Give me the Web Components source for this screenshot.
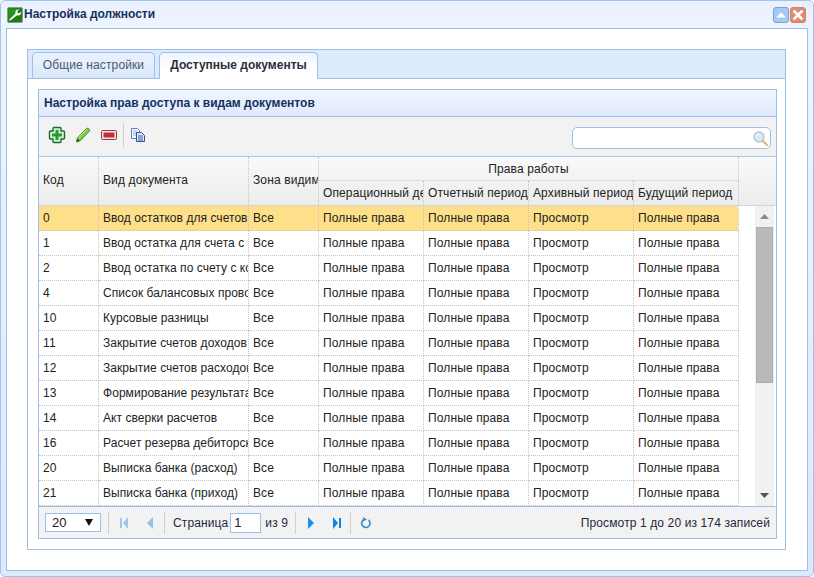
<!DOCTYPE html>
<html lang="ru"><head><meta charset="utf-8"><title>Настройка должности</title>
<style>
html,body{margin:0;padding:0;background:#fff;font:12px "Liberation Sans",Arial,sans-serif}
</style></head><body>
<x-window heading="Настройка должности">
  <x-tabs>
    <x-panel heading="Настройка прав доступа к видам документов">
      <x-toolbar slot="toolbar"></x-toolbar>
      <x-grid></x-grid>
      <x-pager slot="pager"></x-pager>
    </x-panel>
  </x-tabs>
</x-window>
<script>
function el(name,html){customElements.define(name,class extends HTMLElement{constructor(){super();this.attachShadow({mode:'open'}).innerHTML=typeof html==='function'?html(this):html;}});}

el('x-window',h=>`<style>
:host{display:flex;flex-direction:column;box-sizing:border-box;width:814px;height:577px;border:1px solid #a3c3ed;border-radius:5px;padding:0 5px 5px;background:linear-gradient(#e8f0fd,#eef4fe 20px,#dce9fc);color:#15315f}
.bar{display:flex;align-items:center;height:27px;flex:none}
.t{font-weight:bold;font-size:12px;margin-left:1px;padding-bottom:2px;color:#15315f;flex:1}
.wrench{margin-left:1px}
.btn{margin-left:1px;display:block}
.btn+.btn{margin-left:1px}
.body{flex:1;display:flex;box-sizing:border-box;border:1px solid #9dbfea;background:#fff;padding:20px 21px 20px 20px;min-height:0}
</style>
<div class="bar">
<svg class="wrench" width="16" height="16" viewBox="0 0 16 16"><rect x=".5" y=".5" width="15" height="15" rx="1.500" fill="#1f7a17" stroke="#7d9f84"/><path d="M1.500 1.500h13L1.500 14.500z" fill="#2e9a24" opacity=".7"/><path d="M3 13.800l-.8-1L8.500 6.500c-.6-1.800 0-3.600 2.700-4.100l.6.3-1.500 1.600.4 1.700 1.700.3 1.500-1.500.3.600c-.4 2.600-2.300 3.400-4.100 2.800z" fill="#fff"/></svg>
<div class="t">${h.getAttribute('heading')}</div>
<svg class="btn" width="16" height="16" viewBox="0 0 16 16"><rect x=".5" y=".5" width="15" height="15" rx="2.500" fill="#a6c8f5" stroke="#7da0d2"/><path d="M3 10.500L8 5.500l5 5z" fill="#fff"/></svg>
<svg class="btn" width="16" height="16" viewBox="0 0 16 16"><rect x=".5" y=".5" width="15" height="15" rx="2.500" fill="#e58a6b" stroke="#c08a75"/><path d="M4.500 4.500l7 7M11.500 4.500l-7 7" stroke="#fff" stroke-width="2.600" stroke-linecap="square"/></svg>
<span style="width:2px"></span>
</div>
<div class="body"><slot></slot></div>`);

el('x-tabs',`<style>
:host{display:flex;flex-direction:column;flex:1;box-sizing:border-box;border:1px solid #9dbfea;background:#fff;min-width:0}
.nav{display:flex;align-items:flex-end;height:29px;box-sizing:border-box;background:#dde9fd;border-bottom:1px solid #9dbfea;padding:2px 0 0 4px;gap:4px;flex:none}
.tab{box-sizing:border-box;height:26px;border:1px solid #9dbfea;border-bottom:0;border-radius:5px 5px 0 0;display:flex;align-items:center;justify-content:center;font-size:12px;padding-bottom:2px}
.a{width:123px;background:linear-gradient(#eaf2fe,#dbe8fc);color:#4a5a72;letter-spacing:.12px}
.b{width:159px;height:27px;margin-bottom:-1px;background:linear-gradient(#eef4fe,#fff 60%);font-weight:bold;color:#2a2f3a}
.c{flex:1;display:flex;padding:10px 8px 10px 10px;min-height:0}
</style>
<div class="nav"><div class="tab a">Общие настройки</div><div class="tab b">Доступные документы</div></div>
<div class="c"><slot></slot></div>`);

el('x-panel',h=>`<style>
:host{display:flex;flex-direction:column;flex:1;box-sizing:border-box;border:1px solid #9dbfea;background:#fff;min-width:0}
.h{height:27px;flex:none;box-sizing:border-box;border-bottom:1px solid #9dbfea;background:linear-gradient(#f0f5fe,#dfeafd);font-weight:bold;font-size:12px;color:#15315f;display:flex;align-items:center;padding-left:5px}
</style>
<div class="h">${h.getAttribute('heading')}</div>
<slot name="toolbar"></slot><slot></slot><slot name="pager"></slot>`);

el('x-toolbar',`<style>
:host{display:flex;align-items:center;height:39px;flex:none;box-sizing:border-box;background:#f2f2f2;padding:0 0 3px 9px}
svg{display:block;flex:none}
.sep{width:1px;height:24px;background:#cfcfcf;margin:0 5px 0 6px;flex:none}
.s{margin:6px 5px 0 auto;width:199px;height:22px;box-sizing:border-box;border:1px solid #9dbfea;border-radius:5px;background:#fff;display:flex;align-items:center;justify-content:flex-end;padding-right:1px}
</style>
<svg width="18" height="18" viewBox="0 0 18 18" style="margin-right:8px"><path d="M6 1.500h6a1 1 0 0 1 1 1V5h2.500a1 1 0 0 1 1 1v6a1 1 0 0 1-1 1H13v2.500a1 1 0 0 1-1 1H6a1 1 0 0 1-1-1V13H2.500a1 1 0 0 1-1-1V6a1 1 0 0 1 1-1H5V2.500a1 1 0 0 1 1-1z" fill="#d9f0d8" stroke="#1d6b2c" stroke-width="1.400"/><path d="M7.500 4h3v3.500H14v3h-3.500V14h-3v-3.500H4v-3h3.500z" fill="#1f9c33"/></svg>
<svg width="18" height="18" viewBox="0 0 18 18" style="margin-right:7px"><path d="M2.500 16l.9-4L12.500 2.500c1-.8 2.500.2 3 1.200.3.600.2 1.100-.2 1.500L6.200 14.700z" fill="#7fcf3b" stroke="#2f7f20" stroke-width=".9"/><path d="M3.200 12.500l2.600 2-3.100 1.300z" fill="#1d5c18"/><path d="M4.500 11.800L13 3.300" stroke="#c8f09a" stroke-width="1"/></svg>
<svg width="18" height="18" viewBox="0 0 18 18"><rect x="2.500" y="4.500" width="15" height="9" rx="1" fill="#f3e4e4" stroke="#9a3b3b"/><rect x="4.500" y="6.500" width="11" height="5" fill="#b93238"/></svg>
<span class="sep"></span>
<svg width="18" height="18" viewBox="0 0 18 18"><path d="M2.500 2.500h6l2 2v8h-8z" fill="#f4f8fe" stroke="#5f82b8"/><path d="M4 5h4M4 7h5M4 9h5" stroke="#8fb0df"/><path d="M7.500 6.500h5l3 3v6h-8z" fill="#dbe7f8" stroke="#2f4f96"/><path d="M9 10h5M9 12h5M9 14h5" stroke="#3a62ad"/></svg>
<div class="s"><svg width="17" height="17" viewBox="0 0 17 17"><circle cx="7" cy="7" r="5" fill="#d6ecfb" stroke="#b6c1c9" stroke-width="1.300"/><path d="M3.800 6.500a3.500 3.500 0 0 1 3-2.800" stroke="#fff" fill="none"/><path d="M11 11l4 4" stroke="#e9b36d" stroke-width="2.200" stroke-linecap="round"/></svg></div>`);

const names=[['0','Ввод остатков для счетов'],['1','Ввод остатка для счета с аналитикой'],['2','Ввод остатка по счету с контрагентом'],['4','Список балансовых проводок'],['10','Курсовые разницы'],['11','Закрытие счетов доходов'],['12','Закрытие счетов расходов'],['13','Формирование результата'],['14','Акт сверки расчетов'],['16','Расчет резерва дебиторской'],['20','Выписка банка (расход)'],['21','Выписка банка (приход)']];
el('x-grid',()=>{
const cell=(t,c='')=>`<div class="c ${c}"><span>${t}</span></div>`;
const rows=names.map((n,i)=>`<div class="r${i==0?' sel':''}">`+cell(n[0])+cell(n[1],'n')+cell('Все')+cell('Полные права')+cell('Полные права')+cell('Просмотр')+cell('Полные права')+'</div>').join('');
return `<style>
:host{display:flex;flex-direction:column;flex:none;height:350px;box-sizing:border-box;border-top:1px solid #a9c6ee;color:#222;font-size:12px;letter-spacing:.12px;background:#fff}
.c{box-sizing:border-box;overflow:hidden;white-space:nowrap;border-right:1px dotted #c4c4c4;border-bottom:1px dotted #c4c4c4;padding:0 0 0 4px;display:flex;align-items:center}
.n{letter-spacing:.05px}
.hd{display:grid;grid-template-columns:60px 150px 70px 105px 105px 105px 105px 1fr;grid-template-rows:24px 24px;height:48px;flex:none;background:linear-gradient(#f9f9f9,#ececec);border-bottom:1px solid #d4d4d4;box-sizing:content-box}
.hd .c{border-bottom:0}
.sp{grid-row:span 2;padding-bottom:3px!important}
.top{grid-column:span 4;justify-content:center;border-bottom:1px dotted #c4c4c4!important;padding:0}
.hd .e{border-right:0}
.main{flex:1;display:flex;min-height:0}
.rows{width:699px;flex:none}
.r{display:grid;grid-template-columns:60px 150px 70px 105px 105px 105px 105px;height:25px}
.sel{background:#ffe08a}
.gap{width:17px;flex:none}
.sb{width:19px;flex:none;background:#f1f1f1;display:flex;flex-direction:column;align-items:center;justify-content:space-between}
.ar{height:21px;display:flex;align-items:center;justify-content:center;flex:none}
.th{width:17px;height:156px;background:#b9b9b9;box-sizing:border-box;border:1px solid #adadad;flex:none}
.tk{flex:1;width:100%;display:flex;justify-content:center}
</style>
<div class="hd">
<div class="c sp">Код</div><div class="c sp">Вид документа</div><div class="c sp"><span>Зона видимости</span></div>
<div class="c top">Права работы</div><div class="c sp e" style="grid-column:8;grid-row:1/span 2;border-left:0"></div>
<div class="c"><span>Операционный день</span></div><div class="c"><span>Отчетный период</span></div><div class="c"><span>Архивный период</span></div><div class="c"><span>Будущий период</span></div>
</div>
<div class="main"><div class="rows">${rows}</div><div class="gap"></div>
<div class="sb"><div class="ar"><svg width="9" height="5"><path d="M0 5L4.500 0 9 5z" fill="#8a8a8a"/></svg></div><div class="tk"><div class="th"></div></div><div class="ar" style="padding-top:2px"><svg width="9" height="5"><path d="M0 0L4.500 5 9 0z" fill="#555"/></svg></div></div></div>`;
});

el('x-pager',`<style>
:host{display:flex;align-items:center;flex:none;height:32px;box-sizing:border-box;background:#f2f2f2;border-top:1px solid #9dbfea;padding-left:6px;font-size:12px;letter-spacing:.12px;color:#1f2a3c}
svg{display:block;flex:none}
.sel{width:56px;height:19px;box-sizing:border-box;border:1px solid #9dbfea;background:#fff;display:flex;align-items:center;justify-content:space-between;padding:0 7px 0 6px;font-size:13px;color:#222;flex:none}
.sep{width:1px;height:22px;background:#cfcfcf;flex:none}
.in{width:31px;height:20px;box-sizing:border-box;border:1px solid #9dbfea;background:#fff;display:flex;align-items:center;padding-left:3px;margin:0 4px 0 2px;font-size:13px;color:#222;flex:none}
.info{margin-left:auto;margin-right:6px}
.ic{display:flex;justify-content:center;width:26px;flex:none}
</style>
<div class="sel">20<svg width="8" height="7"><path d="M0 0h8L4 7z" fill="#111"/></svg></div>
<span class="sep" style="margin-left:7px"></span>
<div class="ic" style="margin-left:2px"><svg width="10" height="12"><path d="M1 1h2v10H1zM9 0v12L4 6z" fill="#9cc8ee"/></svg></div>
<div class="ic"><svg width="8" height="12"><path d="M7 0v12L1 6z" fill="#8fc1ee"/></svg></div>
<span class="sep" style="margin-left:1px"></span>
<span style="margin-left:8px">Страница</span>
<div class="in">1</div><span>из 9</span>
<span class="sep" style="margin-left:7px"></span>
<div class="ic" style="margin-left:2px"><svg width="8" height="12"><path d="M1 0v12l6-6z" fill="#1d8fe8"/></svg></div>
<div class="ic"><svg width="10" height="12"><path d="M1 0v12l5-6zM7 1h2v10H7z" fill="#1a80d6"/></svg></div>
<span class="sep" style="margin-left:0"></span>
<div class="ic" style="margin-left:2px"><svg width="12" height="12" viewBox="0 0 12 12"><path d="M4.200 2.400A4.200 4.200 0 1 0 8.500 3" fill="none" stroke="#3a8fd0" stroke-width="1.700"/><path d="M3 0l4 2.400-4 2z" fill="#3a8fd0"/></svg></div>
<span class="info">Просмотр 1 до 20 из 174 записей</span>`);
</script>
</body></html>
